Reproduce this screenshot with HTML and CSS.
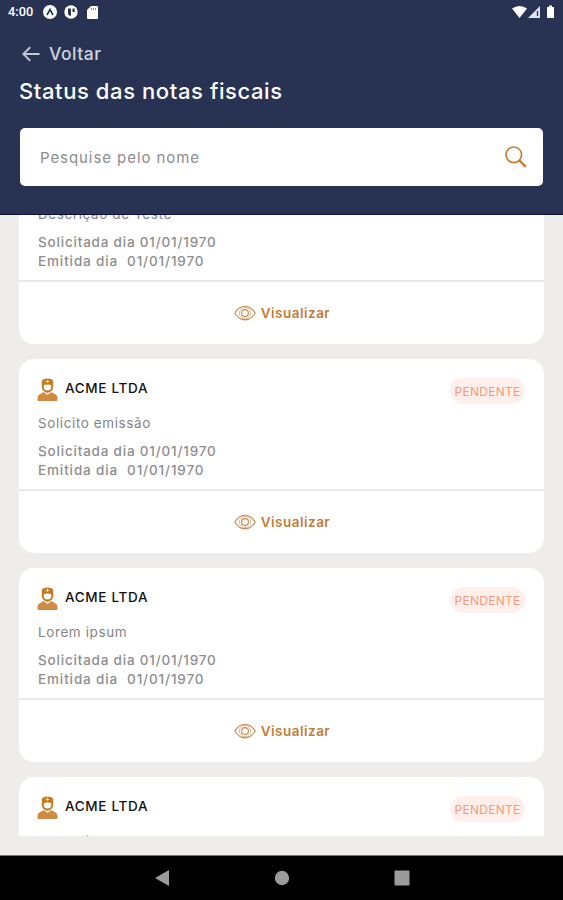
FILE: index.html
```html
<!DOCTYPE html>
<html lang="pt-BR">
<head>
<meta charset="utf-8">
<title>Status das notas fiscais</title>
<link rel="stylesheet" href="styles.css">
</head>
<body>
<svg class="defs" aria-hidden="true">
  <symbol id="user" viewBox="0 0 20 24">
    <path fill="#cf8b43" d="M0 22v-2q0-3.500 4-4.500 2-2 3.500-.5l2.500 2 2.500-2q1.500-1.500 3.500.5 4 1 4 4.500v2q0 1-1 1H1q-1 0-1-1z"/>
    <path fill="#c57a22" d="M4.300 3Q5 .5 10 .5T15.700 3V9.500q-.7 4-5.700 5.500-5-1.500-5.700-5.500z"/>
    <path fill="#fff" d="M6.300 7q3.700-1.200 7.400 0v2.500q-.5 3-3.700 3t-3.700-3z"/>
    <path fill="none" stroke="#f7dfc0" stroke-width="1" d="M8.300 3.400h3.400M10 1.800v3"/>
  </symbol>
  <symbol id="eye" viewBox="0 0 22 16">
    <g fill="none" stroke="#c88a50" stroke-width="1.150"><path d="M.8 8Q5 1.200 11 1.200T21.200 8Q17 14.800 11 14.800T.8 8z"/><circle cx="11" cy="8" r="5.600" stroke-width=".6"/><circle cx="11" cy="8" r="3.400"/></g>
  </symbol>
</svg>
<header class="header">
  <div class="status">
    <span class="time">4:00</span>
    <svg class="dot" viewBox="0 0 14 14"><circle cx="7" cy="7" r="7" fill="#fff"/><path d="M4 10l3-5.500L10 10" fill="none" stroke="#283353" stroke-width="1.600"/></svg>
    <svg class="dot" viewBox="0 0 14 14"><circle cx="7" cy="7" r="6.700" fill="#fff"/><path d="M4 3.500h3v7.200H5.500L4 9zM8.500 3.500h2.200v3.500H8.500z" fill="#283353"/></svg>
    <svg class="sd" viewBox="0 0 11 13"><path d="M4 0h6q1 0 1 1v11q0 1-1 1H1q-1 0-1-1V4z" fill="#fff"/><path d="M4.500 2v2M6.500 2v2M8.500 2v2" stroke="#8991a6"/></svg>
    <svg class="signals" viewBox="0 0 44 14"><path d="M0 3.500Q7.500-1.500 15 3.500L7.500 13z" fill="#fff"/><path d="M28 1v12H16z" fill="#dfe2ea"/><path d="M25.500 6v5" stroke="#283353" stroke-width="1.300"/><path d="M35 2h2V.5h3V2h2v11h-7z" fill="#fff"/></svg>
  </div>
  <div class="back">
    <svg viewBox="0 0 18 16"><path d="M17.500 8H1.500M8.200 1.200L1.300 8l6.900 6.800" fill="none" stroke="#c3c8d4" stroke-width="1.900"/></svg>
    <span>Voltar</span>
  </div>
  <h1>Status das notas fiscais</h1>
  <div class="search">
    <span>Pesquise pelo nome</span>
    <svg viewBox="0 0 22 22"><circle cx="8.800" cy="8.800" r="7.800" fill="none" stroke="#c77c2c" stroke-width="1.600"/><path d="M14.500 14.500l6.300 6.300" stroke="#c77c2c" stroke-width="2.400"/></svg>
  </div>
</header>
<main class="list">
  <article class="card first">
    <div class="head"><svg class="user"><use href="#user"/></svg><h2>ACME LTDA</h2><span class="badge">PENDENTE</span></div>
    <p class="desc">Descrição de Teste</p>
    <p class="date">Solicitada dia 01/01/1970</p>
    <p class="date emit">Emitida dia&nbsp; 01/01/1970</p>
    <div class="view"><svg><use href="#eye"/></svg><span>Visualizar</span></div>
  </article>
  <article class="card">
    <div class="head"><svg class="user"><use href="#user"/></svg><h2>ACME LTDA</h2><span class="badge">PENDENTE</span></div>
    <p class="desc">Solicito emissão</p>
    <p class="date">Solicitada dia 01/01/1970</p>
    <p class="date emit">Emitida dia&nbsp; 01/01/1970</p>
    <div class="view"><svg><use href="#eye"/></svg><span>Visualizar</span></div>
  </article>
  <article class="card">
    <div class="head"><svg class="user"><use href="#user"/></svg><h2>ACME LTDA</h2><span class="badge">PENDENTE</span></div>
    <p class="desc">Lorem ipsum</p>
    <p class="date">Solicitada dia 01/01/1970</p>
    <p class="date emit">Emitida dia&nbsp; 01/01/1970</p>
    <div class="view"><svg><use href="#eye"/></svg><span>Visualizar</span></div>
  </article>
  <article class="card">
    <div class="head"><svg class="user"><use href="#user"/></svg><h2>ACME LTDA</h2><span class="badge">PENDENTE</span></div>
    <p class="desc">Lorem ipsum</p>
  </article>
</main>
<nav class="nav">
  <svg viewBox="0 0 16 16"><path d="M15 0v16L1 8z"/></svg>
  <svg viewBox="0 0 16 16"><circle cx="8" cy="8" r="7.200"/></svg>
  <svg viewBox="0 0 16 16"><rect x=".5" y=".5" width="15" height="15" rx="1"/></svg>
</nav>
</body>
</html>
```
FILE: styles.css
```css
* { box-sizing: border-box; margin: 0; padding: 0; }
body { width: 563px; height: 900px; overflow: hidden; display: flex; flex-direction: column; background: #efedec; font-family: Inter, "Liberation Sans", sans-serif; white-space: nowrap; }
svg { display: block; flex: none; }
.defs { width: 0; height: 0; position: absolute; }
.header { height: 215px; flex: none; background: #283353; border-bottom: 1px solid #0d1043; padding: 0 20px; }
.status { height: 24px; margin: 0 -12px; display: flex; align-items: center; }
.time { width: 35px; font: 500 12.8px/24px Roboto, sans-serif; color: #fff; }
.dot { width: 14px; height: 14px; margin-right: 7px; }
.sd { width: 11px; height: 13px; margin-left: 2px; }
.signals { width: 44px; height: 14px; margin: 0 -1px 0 auto; }
.back { height: 24px; margin-top: 18px; display: flex; align-items: center; gap: 9px; padding-left: 2px; color: #d0d4de; font-size: 17.5px; font-weight: 500; letter-spacing: .5px; line-height: 24px; }
.back svg { width: 18px; height: 16px; }
h1 { margin: 9px 0 0 -1px; height: 32px; font-size: 22px; line-height: 32px; font-weight: 500; letter-spacing: .59px; color: #fff; }
.search { height: 58px; margin-top: 21px; background: #fff; border-radius: 5px; padding: 0 16px 0 20px; display: flex; align-items: center; justify-content: space-between; color: #8c8c8f; font-size: 15px; letter-spacing: .93px; }
.search svg { width: 22px; height: 22px; }
.list { height: 621px; flex: none; overflow: hidden; padding: 0 19px; }
.card { height: 194px; margin-bottom: 15px; padding-top: 19px; background: #fff; border-radius: 15px; overflow: hidden; }
.card.first { margin-top: -65px; }
.head { height: 26px; padding: 0 19px 0 18px; display: flex; align-items: flex-start; }
.user { width: 21px; height: 24px; }
h2 { margin-left: 7px; font-size: 13.5px; font-weight: 500; letter-spacing: .68px; line-height: 20px; color: #111; }
.badge { margin-left: auto; width: 75px; height: 26px; border-radius: 13px; background: #ffefea; color: #f39b80; font-size: 12px; letter-spacing: .28px; line-height: 27px; text-align: center; }
.desc, .date { padding-left: 19px; color: #858585; }
.desc { margin: 9px 0; font-size: 13.5px; letter-spacing: .6px; line-height: 20px; }
.date { font-size: 13.5px; line-height: 19px; font-weight: 500; letter-spacing: .8px; color: #8e8e8e; }
.emit { letter-spacing: .87px; }
.view { margin-top: 9px; height: 64px; border-top: 2px solid #e9e8e8; padding-left: 1px; display: flex; justify-content: center; align-items: center; gap: 5px; color: #c27c35; font-size: 13.5px; font-weight: 600; letter-spacing: .48px; line-height: 20px; }
.view svg { width: 22px; height: 16px; }
.nav { height: 45px; margin-top: auto; border-top: 1px solid #777; background: #000; display: flex; justify-content: center; align-items: center; gap: 104px; }
.nav svg { width: 16px; height: 16px; fill: #9b9b9b; }
```
